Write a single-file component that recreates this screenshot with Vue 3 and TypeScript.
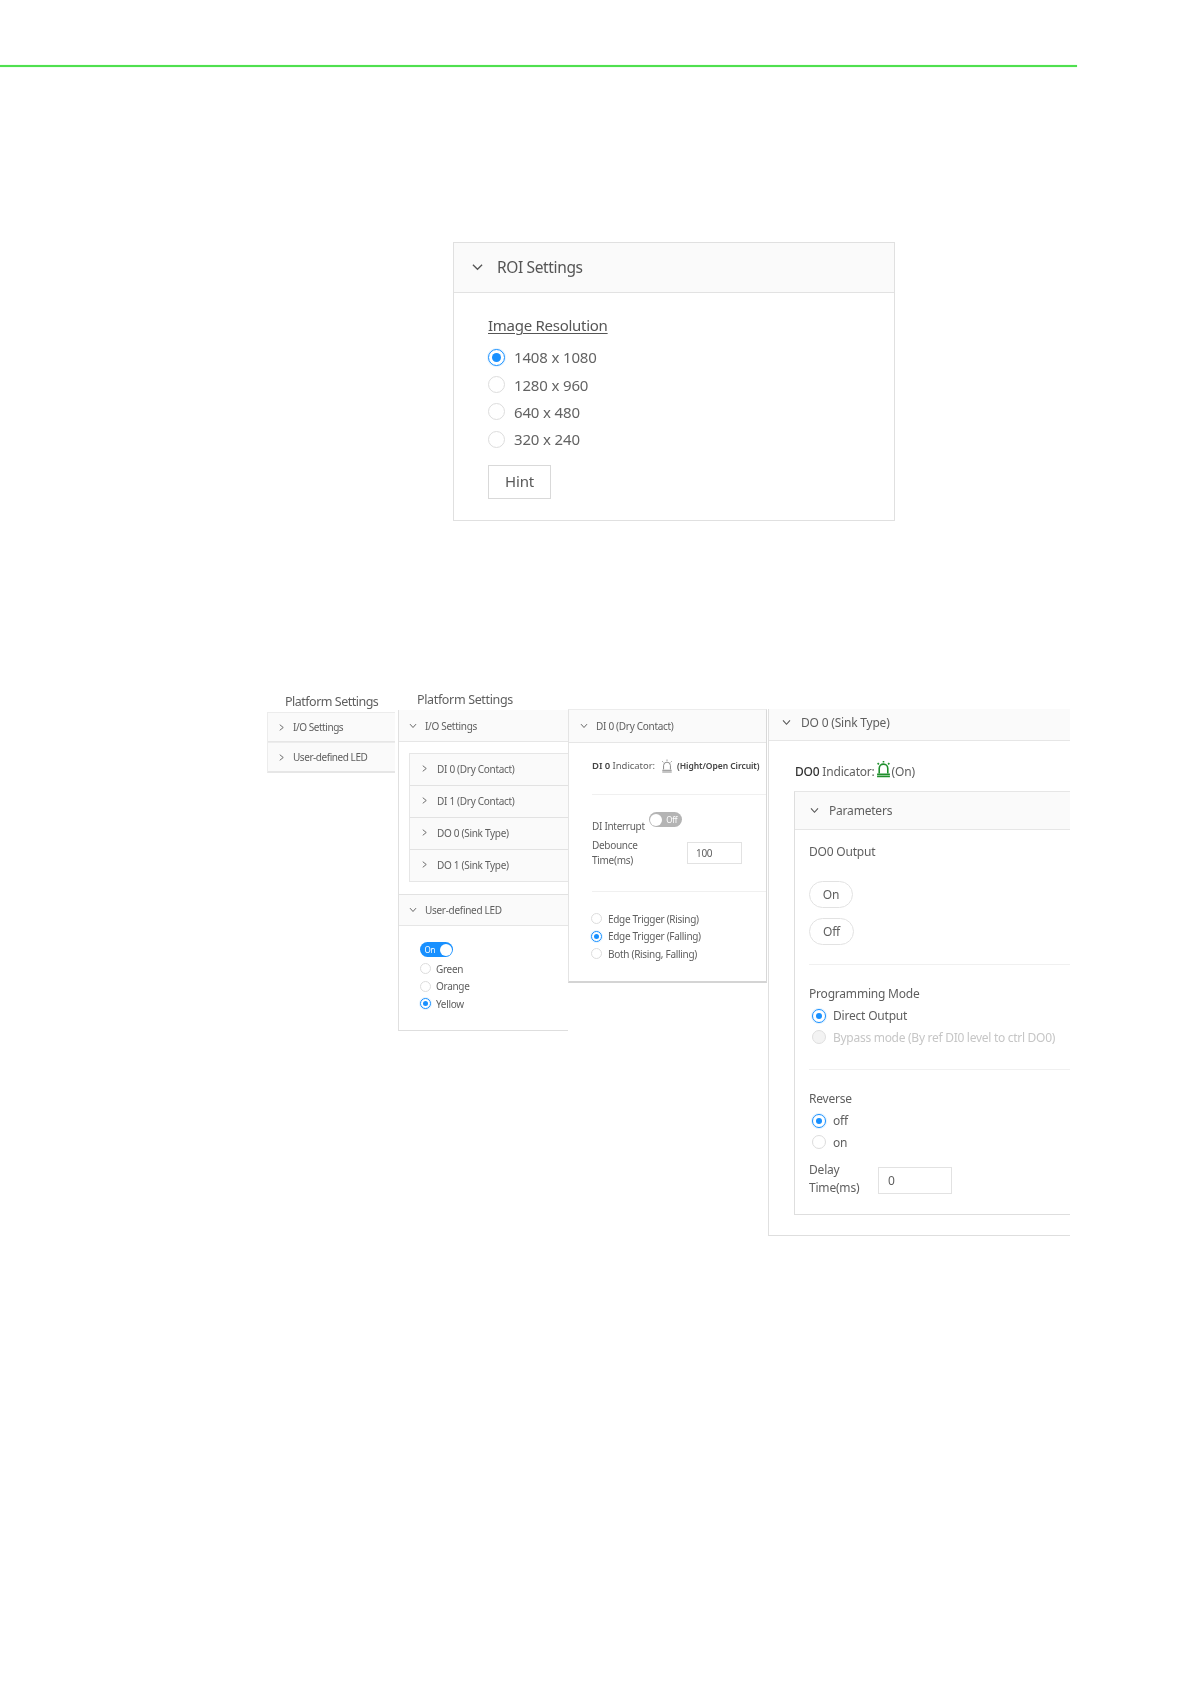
<script setup lang="ts">
const resolutions = [
  { label: '1408 x 1080', on: true },
  { label: '1280 x 960', on: false },
  { label: '640 x 480', on: false },
  { label: '320 x 240', on: false },
]
const ioRows = ['DI 0 (Dry Contact)', 'DI 1 (Dry Contact)', 'DO 0 (Sink Type)', 'DO 1 (Sink Type)']
const leds = [
  { label: 'Green', on: false },
  { label: 'Orange', on: false },
  { label: 'Yellow', on: true },
]
const triggers = [
  { label: 'Edge Trigger (Rising)', on: false },
  { label: 'Edge Trigger (Falling)', on: true },
  { label: 'Both (Rising, Falling)', on: false },
]
</script>

<template>
  <div class="page">
    <div class="rule"></div>

    <section class="roi">
      <header class="roi-head">
        <svg class="chev roi-chev" viewBox="0 0 12 8"><path d="M1 1.5 6 6.5 11 1.5" /></svg>
        <span>ROI Settings</span>
      </header>
      <div class="roi-body">
        <div class="roi-title">Image Resolution</div>
        <label v-for="r in resolutions" :key="r.label" class="roi-radio">
          <span class="radio big" :class="{ on: r.on }"></span>{{ r.label }}
        </label>
        <button class="hint">Hint</button>
      </div>
    </section>

    <div class="figures">
      <div class="fig fig1">
        <div class="fig-title t1">Platform Settings</div>
        <div class="panel">
          <div class="head h30">
            <svg class="chev sm" viewBox="0 0 8 10"><path d="M1.5 1 6.5 5 1.5 9" /></svg>
            <span>I/O Settings</span>
          </div>
          <div class="head h30">
            <svg class="chev sm" viewBox="0 0 8 10"><path d="M1.5 1 6.5 5 1.5 9" /></svg>
            <span>User-defined LED</span>
          </div>
        </div>
      </div>

      <div class="fig fig2">
        <div class="fig-title t2">Platform Settings</div>
        <div class="panel open">
          <div class="head h32 pad-a">
            <svg class="chev sm dn" viewBox="0 0 10 8"><path d="M1 1.5 5 6 9 1.5" /></svg>
            <span>I/O Settings</span>
          </div>
          <div class="io-list">
            <div v-for="row in ioRows" :key="row" class="io-row">
              <svg class="chev sm" viewBox="0 0 8 10"><path d="M1.5 1 6.5 5 1.5 9" /></svg>
              <span>{{ row }}</span>
            </div>
          </div>
          <div class="head h32 pad-a led-head">
            <svg class="chev sm dn" viewBox="0 0 10 8"><path d="M1 1.5 5 6 9 1.5" /></svg>
            <span>User-defined LED</span>
          </div>
          <div class="led-body">
            <div class="toggle on"><span class="tog-text">On</span><i></i></div>
            <label v-for="l in leds" :key="l.label" class="sm-radio">
              <span class="radio" :class="{ on: l.on }"></span>{{ l.label }}
            </label>
          </div>
        </div>
      </div>

      <div class="fig fig3">
        <div class="panel bordered">
          <div class="head h33 pad-b">
            <svg class="chev sm dn" viewBox="0 0 10 8"><path d="M1 1.5 5 6 9 1.5" /></svg>
            <span>DI 0 (Dry Contact)</span>
          </div>
          <div class="di-body">
            <div class="di-ind">
              <b>DI 0</b>&nbsp;Indicator:
              <svg class="alarm grey" viewBox="0 0 14 16">
                <path d="M3 12V7.5a4 4 0 0 1 8 0V12M1.5 13h11M1.5 15h11M7 0.5v1.5M1.5 2.5l1.2 1.2M12.5 2.5l-1.2 1.2" />
              </svg>
              <b class="ind-state">(Hight/Open Circuit)</b>
            </div>
            <div class="divider d1"></div>
            <div class="di-int">
              <span>DI Interrupt</span>
              <div class="toggle off"><i></i><span class="tog-text">Off</span></div>
            </div>
            <div class="deb">
              <span class="deb-label">Debounce<br />Time(ms)</span>
              <div class="input deb-input">100</div>
            </div>
            <div class="divider d2"></div>
            <label v-for="t in triggers" :key="t.label" class="sm-radio wide">
              <span class="radio" :class="{ on: t.on }"></span>{{ t.label }}
            </label>
          </div>
        </div>
      </div>

      <div class="fig fig4">
        <div class="panel open do">
          <div class="head h32 pad-c">
            <svg class="chev md" viewBox="0 0 10 8"><path d="M1 1.5 5 6 9 1.5" /></svg>
            <span>DO 0 (Sink Type)</span>
          </div>
          <div class="do-ind">
            <b>DO0</b>&nbsp;Indicator:<svg class="alarm green" viewBox="0 0 14 16">
              <path d="M3 12V7.5a4 4 0 0 1 8 0V12M1 13h12M1 15h12M7 0.5v1.5M1.5 2.5l1.2 1.2M12.5 2.5l-1.2 1.2" />
            </svg>(On)
          </div>
          <div class="params">
            <div class="head h38 pad-d">
              <svg class="chev md" viewBox="0 0 10 8"><path d="M1 1.5 5 6 9 1.5" /></svg>
              <span>Parameters</span>
            </div>
            <div class="p-body">
              <div class="p-title output">DO0 Output</div>
              <div class="pill on-pill">On</div>
              <div class="pill off-pill">Off</div>
              <div class="divider d3"></div>
              <div class="p-title mode">Programming Mode</div>
              <label class="do-radio first"><span class="radio on"></span>Direct Output</label>
              <label class="do-radio disabled"><span class="radio dis"></span>Bypass mode (By ref DI0 level to ctrl DO0)</label>
              <div class="divider d4"></div>
              <div class="p-title reverse">Reverse</div>
              <label class="do-radio first"><span class="radio on"></span>off</label>
              <label class="do-radio"><span class="radio"></span>on</label>
              <div class="delay">
                <span class="delay-label">Delay<br />Time(ms)</span>
                <div class="input delay-input">0</div>
              </div>
            </div>
          </div>
        </div>
      </div>
    </div>
  </div>
</template>

<style>
html, body { margin: 0; background: #fff; }
</style>

<style scoped>
.page {
  width: 1191px;
  height: 1684px;
  overflow: hidden;
  background: #fff;
  font-family: "Noto Sans", "Open Sans", sans-serif;
  color: #5f5f5f;
  padding-top: 65px;
  box-sizing: border-box;
}
.rule { width: 1077px; height: 2px; background: #4fe04f; box-shadow: 0 0 1px #7fee7f; }

.chev { fill: none; stroke: #555; stroke-width: 1.2; flex: none; }
.sm { width: 7px; height: 7px; }
.md { width: 9px; height: 7px; }

.roi {
  width: 442px;
  height: 279px;
  margin: 175px 0 0 453px;
  box-sizing: border-box;
  border: 1px solid #e0e0e0;
  filter: blur(0.3px);
}
.roi-head {
  height: 50px;
  box-sizing: border-box;
  background: #fafafa;
  border-bottom: 1px solid #e2e2e2;
  display: flex;
  align-items: center;
  padding: 0 0 1px 18px;
  font-size: 15.5px;
  letter-spacing: -0.36px;
  color: #555;
}
.roi-chev { width: 11px; height: 8px; margin-right: 14px; stroke-width: 1.4; }
.roi-body { padding: 22px 0 0 34px; }
.roi-title {
  font-size: 15px;
  line-height: 20px;
  letter-spacing: -0.27px;
  text-decoration: underline;
  text-underline-offset: 2px;
  color: #555;
  margin-bottom: 9px;
}
.roi-radio {
  display: flex;
  align-items: center;
  height: 27.4px;
  font-size: 15px;
  letter-spacing: -0.15px;
  color: #636363;
  padding-bottom: 1px;
  box-sizing: border-box;
}
.radio {
  flex: none;
  box-sizing: border-box;
  width: 11px;
  height: 11px;
  border-radius: 50%;
  border: 1px solid #dcdcdc;
  background: #fff;
  display: inline-flex;
  align-items: center;
  justify-content: center;
}
.radio.on { border-color: #1890ff; box-shadow: 0 0 0 1px rgba(24, 144, 255, 0.12); }
.radio.on::after {
  content: "";
  width: 5px;
  height: 5px;
  border-radius: 50%;
  background: #1890ff;
}
.radio.big { width: 17px; height: 17px; margin-right: 9px; }
.radio.big.on::after { width: 9px; height: 9px; }
.hint {
  display: block;
  margin-top: 11px;
  width: 63px;
  height: 34px;
  padding: 0 0 2px;
  background: #fff;
  border: 1px solid #d9d9d9;
  font: inherit;
  font-size: 15px;
  letter-spacing: -0.2px;
  color: #595959;
}

.figures {
  display: flex;
  align-items: flex-start;
  margin: 169px 0 0 267px;
  filter: blur(0.3px);
  letter-spacing: -0.3px;
}
.fig-title { white-space: nowrap; }
.fig1 { width: 128px; margin-right: 3px; letter-spacing: -0.45px; }
.t1 { height: 22px; line-height: 24px; font-size: 12.5px; letter-spacing: -0.5px; padding-left: 18px; box-sizing: border-box; }
.fig2 { width: 170px; }
.t2 { height: 20px; line-height: 20px; font-size: 12.5px; letter-spacing: -0.35px; padding-left: 19px; box-sizing: border-box; }
.fig3 { width: 199px; margin-top: 19px; margin-right: 1px; }
.fig4 { width: 302px; margin-top: 19px; letter-spacing: -0.2px; }

.panel { box-sizing: border-box; font-size: 10px; }
.head {
  display: flex;
  align-items: center;
  box-sizing: border-box;
  background: #fafafa;
  border-bottom: 1px solid #e6e6e6;
  white-space: nowrap;
}
.h30 { height: 30px; padding-left: 10px; gap: 8px; border-top: 1px solid #ececec; }
.h32 { height: 32px; }
.h33 { height: 33px; }
.h38 { height: 38px; }
.pad-a { padding-left: 10px; gap: 8px; }
.pad-b { padding-left: 11px; gap: 8px; padding-bottom: 1px; }
.pad-c { padding: 0 0 5px 13px; gap: 10px; font-size: 12px; }
.pad-d { padding-left: 15px; gap: 10px; font-size: 12px; }
.dn { width: 8px; height: 6px; }
.fig1 .panel { border-left: 1px solid #ececec; border-bottom: 1px solid #e6e6e6; }

.open { border-left: 1px solid #e0e0e0; border-bottom: 1px solid #dedede; }
.fig2 .open { height: 321px; }
.io-list {
  margin: 11px 0 0 10px;
  border: 1px solid #e6e6e6;
  border-right: 0;
}
.io-row {
  height: 32px;
  box-sizing: border-box;
  background: #fafafa;
  border-bottom: 1px solid #e2e2e2;
  display: flex;
  align-items: center;
  padding: 0 0 2px 11px;
  gap: 9px;
}
.io-row:last-child { border-bottom: 0; height: 31px; }
.led-head { margin-top: 12px; border-top: 1px solid #e2e2e2; }
.led-body { padding: 16px 0 0 21px; }
.toggle {
  width: 33px;
  height: 15px;
  border-radius: 8px;
  display: flex;
  align-items: center;
  justify-content: space-between;
  box-sizing: border-box;
  padding: 0 1.5px;
  font-size: 8px;
  color: #fff;
}
.toggle i { width: 12px; height: 12px; border-radius: 50%; background: #fff; flex: none; }
.toggle.on { background: #1890ff; }
.toggle.off { background: #b4b4b4; }
.tog-text { padding: 0 3px; line-height: 15px; }
.sm-radio {
  display: flex;
  align-items: center;
  height: 17.5px;
  gap: 5px;
  font-size: 10px;
}
.led-body .toggle { margin-bottom: 3px; }
.sm-radio.wide { margin-left: -1px; gap: 6px; }

.bordered {
  height: 274px;
  border-left: 1px solid #e4e4e4;
  border-right: 1px solid #d8d8d8;
  border-bottom: 2px solid #d4d4d4;
  border-top: 1px solid #ececec;
}
.di-body { padding: 0 0 0 23px; }
.di-ind {
  height: 51px;
  display: flex;
  align-items: center;
  white-space: nowrap;
  font-size: 9.5px;
  letter-spacing: -0.05px;
  padding-bottom: 6px;
  box-sizing: border-box;
}
.di-ind b { color: #444; font-weight: 600; }
.alarm { fill: none; stroke-width: 1; flex: none; }
.grey { width: 12px; height: 14px; stroke: #777; margin: 0 4px 0 6px; }
.green { width: 15px; height: 18px; stroke: #1f8f2c; stroke-width: 1.5; margin: -5px 1px 0 1px; }
.ind-state { font-size: 8.5px; }
.divider { height: 1px; background: #f0f0f0; }
.di-int {
  display: flex;
  align-items: flex-start;
  gap: 4px;
  margin-top: 17px;
  height: 21px;
}
.di-int > span { line-height: 14px; margin-top: 7px; }
.deb {
  display: flex;
  align-items: flex-start;
  margin-top: 5px;
  line-height: 15px;
  height: 53px;
}
.deb-label { width: 95px; }
.input {
  box-sizing: border-box;
  border: 1px solid #e2e2e2;
  background: #fff;
  display: flex;
  align-items: center;
}
.deb-input { width: 55px; height: 22px; margin-top: 4px; padding-left: 8px; }
.d2 { margin-bottom: 18px; }

.do { height: 527px; border-right: 0; font-size: 12px; }
.do-ind {
  height: 50px;
  display: flex;
  align-items: center;
  white-space: nowrap;
  padding: 10px 0 0 26px;
  box-sizing: border-box;
  font-size: 12px;
}
.do-ind b { font-weight: 500; color: #333; }
.params {
  margin-left: 25px;
  height: 424px;
  box-sizing: border-box;
  border-left: 1px solid #dedede;
  border-bottom: 1px solid #dedede;
  border-top: 1px solid #e6e6e6;
}
.p-body { padding-left: 14px; }
.p-title { line-height: 16px; font-size: 12px; white-space: nowrap; }
.output { margin-top: 14px; }
.pill {
  box-sizing: border-box;
  height: 27px;
  border: 1px solid #e2e2e2;
  border-radius: 14px;
  display: flex;
  align-items: center;
  justify-content: center;
  font-size: 12px;
  padding-bottom: 1px;
}
.on-pill { width: 44px; margin-top: 21px; }
.off-pill { width: 45px; margin-top: 10px; }
.d3 { margin-top: 19px; }
.mode { margin-top: 21px; }
.do-radio {
  display: flex;
  align-items: center;
  height: 21.5px;
  padding-left: 3px;
  gap: 7px;
  white-space: nowrap;
  font-size: 12px;
}
.do-radio .radio { width: 14px; height: 14px; }
.do-radio .radio.on::after { width: 6px; height: 6px; }
.do-radio.first { margin-top: 3px; }
.disabled { color: #c6c6c6; letter-spacing: -0.28px; }
.radio.dis { background: #f3f3f3; border-color: #dedede; }
.d4 { margin-top: 21px; }
.reverse { margin-top: 21px; }
.delay {
  display: flex;
  align-items: flex-start;
  margin-top: 8px;
  line-height: 18px;
}
.delay-label { width: 69px; }
.delay-input { width: 74px; height: 27px; margin-top: 6px; padding-left: 9px; }
</style>
